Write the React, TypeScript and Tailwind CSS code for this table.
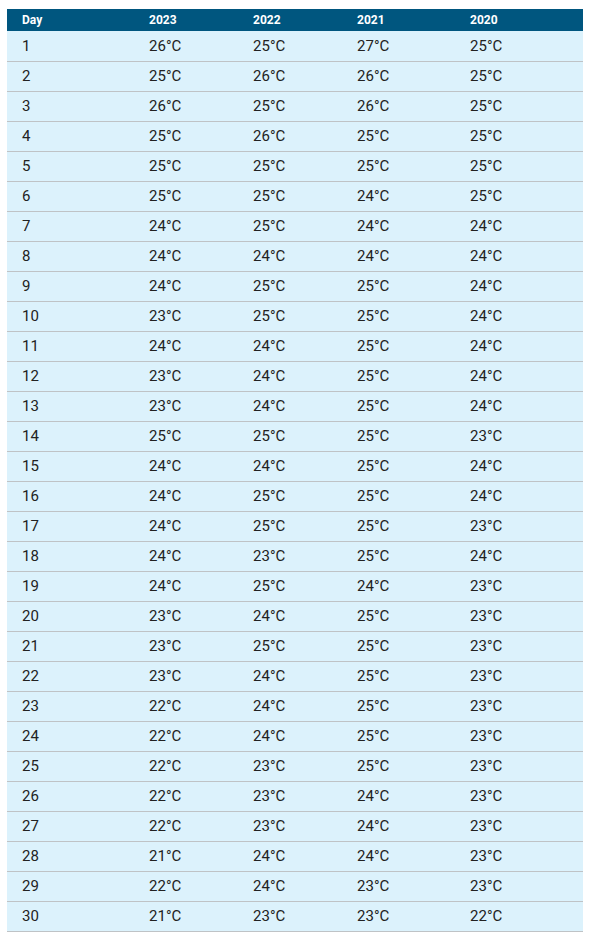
const rows: [number, number, number, number, number][] = [
  [1, 26, 25, 27, 25],
  [2, 25, 26, 26, 25],
  [3, 26, 25, 26, 25],
  [4, 25, 26, 25, 25],
  [5, 25, 25, 25, 25],
  [6, 25, 25, 24, 25],
  [7, 24, 25, 24, 24],
  [8, 24, 24, 24, 24],
  [9, 24, 25, 25, 24],
  [10, 23, 25, 25, 24],
  [11, 24, 24, 25, 24],
  [12, 23, 24, 25, 24],
  [13, 23, 24, 25, 24],
  [14, 25, 25, 25, 23],
  [15, 24, 24, 25, 24],
  [16, 24, 25, 25, 24],
  [17, 24, 25, 25, 23],
  [18, 24, 23, 25, 24],
  [19, 24, 25, 24, 23],
  [20, 23, 24, 25, 23],
  [21, 23, 25, 25, 23],
  [22, 23, 24, 25, 23],
  [23, 22, 24, 25, 23],
  [24, 22, 24, 25, 23],
  [25, 22, 23, 25, 23],
  [26, 22, 23, 24, 23],
  [27, 22, 23, 24, 23],
  [28, 21, 24, 24, 23],
  [29, 22, 24, 23, 23],
  [30, 21, 23, 23, 22],
];

const App = () => {
  return (
    <div className="bg-white pt-[9px] pl-[7px] font-['Roboto',sans-serif]">
      <table className="w-[576px] table-fixed border-collapse">
        <colgroup>
          <col className="w-[127px]" />
          <col className="w-[104px]" />
          <col className="w-[104px]" />
          <col className="w-[113px]" />
          <col className="w-[128px]" />
        </colgroup>
        {/* Header */}
        <thead>
          <tr className="h-[22px] bg-[#00567f] text-white text-[12px] font-bold">
            <th className="pl-[15px] text-left">Day</th>
            <th className="pl-[15px] text-left">2023</th>
            <th className="pl-[15px] text-left">2022</th>
            <th className="pl-[15px] text-left">2021</th>
            <th className="pl-[15px] text-left">2020</th>
          </tr>
        </thead>
        <tbody>
          {rows.map((r) => (
            <tr key={r[0]} className="h-[30px] bg-[#dcf2fc] border-b border-[#bfc3c6] text-[15px] text-[#222]">
              <td className="pl-[15px] pt-px">{r[0]}</td>
              <td className="pl-[15px] pt-px">{r[1]}°C</td>
              <td className="pl-[15px] pt-px">{r[2]}°C</td>
              <td className="pl-[15px] pt-px">{r[3]}°C</td>
              <td className="pl-[15px] pt-px">{r[4]}°C</td>
            </tr>
          ))}
        </tbody>
      </table>
    </div>
  );
};

export default App;
